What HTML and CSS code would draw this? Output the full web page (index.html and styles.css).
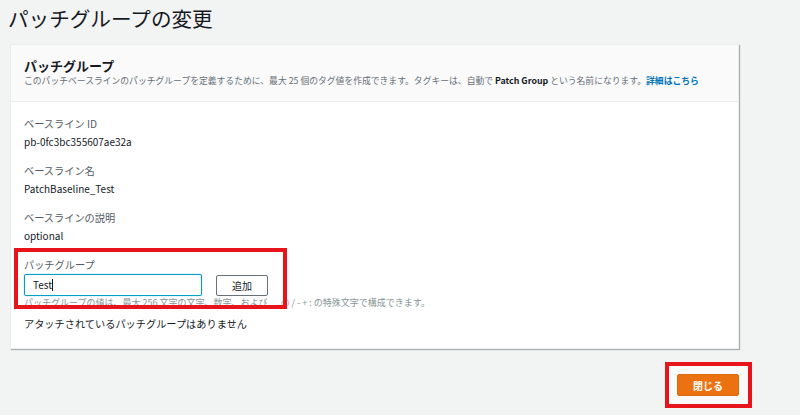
FILE: index.html
```html
<!DOCTYPE html>
<html lang="ja">

<head>
    <meta charset="UTF-8">
    <meta name="viewport" content="width=device-width, initial-scale=1.0">
    <title>パッチグループの変更</title>
    <link rel="stylesheet" href="styles.css">
</head>

<body>
    <h1 class="page-title">パッチグループの変更</h1>

    <div class="card">
        <div class="card-header">
            <h2 class="card-title">パッチグループ</h2>
            <p class="card-desc">このパッチベースラインのパッチグループを定義するために、最大 25 個のタグ値を作成できます。タグキーは、自動で <b>Patch Group</b> という名前になります。<a class="link" href="#">詳細はこちら</a></p>
        </div>

        <div class="card-body">
            <div class="field">
                <div class="label">ベースライン ID</div>
                <div class="value">pb-0fc3bc355607ae32a</div>
            </div>
            <div class="field">
                <div class="label">ベースライン名</div>
                <div class="value">PatchBaseline_Test</div>
            </div>
            <div class="field">
                <div class="label">ベースラインの説明</div>
                <div class="value">optional</div>
            </div>

            <div class="field field-edit">
                <div class="label">パッチグループ</div>
                <div class="input-row">
                    <div class="text-input">Test<span class="caret"></span></div>
                    <button class="btn">追加</button>
                </div>
                <div class="hint">パッチグループの値は、最大 256 文字の文字、数字、および _ . @ / - + : の特殊文字で構成できます。</div>
                <span class="mark mark-field"></span>
            </div>

            <p class="empty">アタッチされているパッチグループはありません</p>
        </div>
    </div>

    <div class="footer">
        <div class="mark-box">
            <button class="btn-primary">閉じる</button>
        </div>
    </div>
</body>

</html>
```

FILE: styles.css
```css
body {
    margin: 0;
    padding: 0;
    background-color: #f2f3f3;
    font-family: "Noto Sans CJK JP", "Noto Sans", sans-serif;
    color: #16191f;
}

.page-title {
    margin: 0;
    padding: 5px 0 0 8px;
    font-size: 20.6px;
    line-height: 27px;
    font-weight: normal;
    color: #16191f;
}

.card {
    width: 727px;
    margin: 12px 0 0 10px;
    background-color: #fff;
    border: 1px solid #eaeded;
    box-shadow: 1px 1px 1px 0 rgba(0, 28, 36, 0.3);
}

.card-header {
    padding: 13px 13px 13px;
    background-color: #fafafa;
    border-bottom: 1px solid #eaeded;
}

.card-title {
    margin: 0;
    font-size: 13px;
    line-height: 16px;
    font-weight: bold;
}

.card-desc {
    margin: 0;
    font-size: 8.8px;
    line-height: 14px;
    color: #687078;
    white-space: nowrap;
}

.card-desc b {
    color: #16191f;
}

.link {
    color: #0073bb;
    font-weight: bold;
    text-decoration: none;
}

.card-body {
    padding: 15px 13px 17px;
}

.field {
    margin-bottom: 15px;
}

.label {
    font-size: 10.2px;
    line-height: 14px;
    color: #545b64;
}

.value {
    margin-top: 4px;
    font-size: 10px;
    line-height: 14px;
    color: #16191f;
}

.field-edit {
    position: relative;
    margin-bottom: 0;
}

.input-row {
    display: flex;
    align-items: center;
    gap: 14px;
    margin-top: 2px;
}

.text-input {
    box-sizing: border-box;
    width: 178px;
    height: 22px;
    padding: 0 8px;
    border: 1px solid #00a1c9;
    border-radius: 2px;
    box-shadow: 0 0 1px #00a1c9;
    font-size: 10px;
    line-height: 20px;
    color: #16191f;
}

.caret {
    display: inline-block;
    width: 1px;
    height: 12px;
    vertical-align: -2px;
    background-color: #16191f;
}

.btn {
    box-sizing: border-box;
    width: 52px;
    height: 21px;
    padding: 0;
    background-color: #fff;
    border: 1px solid #687078;
    border-radius: 2px;
    font-family: inherit;
    font-size: 10px;
    color: #16191f;
}

.hint {
    margin-top: 1px;
    font-size: 9px;
    line-height: 12px;
    color: #879596;
    white-space: nowrap;
}

.empty {
    margin: 8px 0 0;
    font-size: 10.2px;
    line-height: 14px;
}

/* red annotation boxes */
.mark {
    position: absolute;
    border: 4px solid #e8141c;
}

.mark-field {
    top: -10px;
    left: -10px;
    width: 265px;
    height: 53px;
}

.footer {
    display: flex;
    justify-content: flex-end;
    margin: 13px 48px 0 0;
}

.mark-box {
    padding: 8px 9px 8px 8px;
    background-color: #fafafa;
    border: 4px solid #e8141c;
}

.btn-primary {
    display: block;
    width: 62px;
    height: 22px;
    padding: 0;
    background-color: #ec7211;
    border: 1px solid #dd6b10;
    border-radius: 2px;
    font-family: inherit;
    font-size: 10px;
    font-weight: bold;
    color: #fff;
}
```
